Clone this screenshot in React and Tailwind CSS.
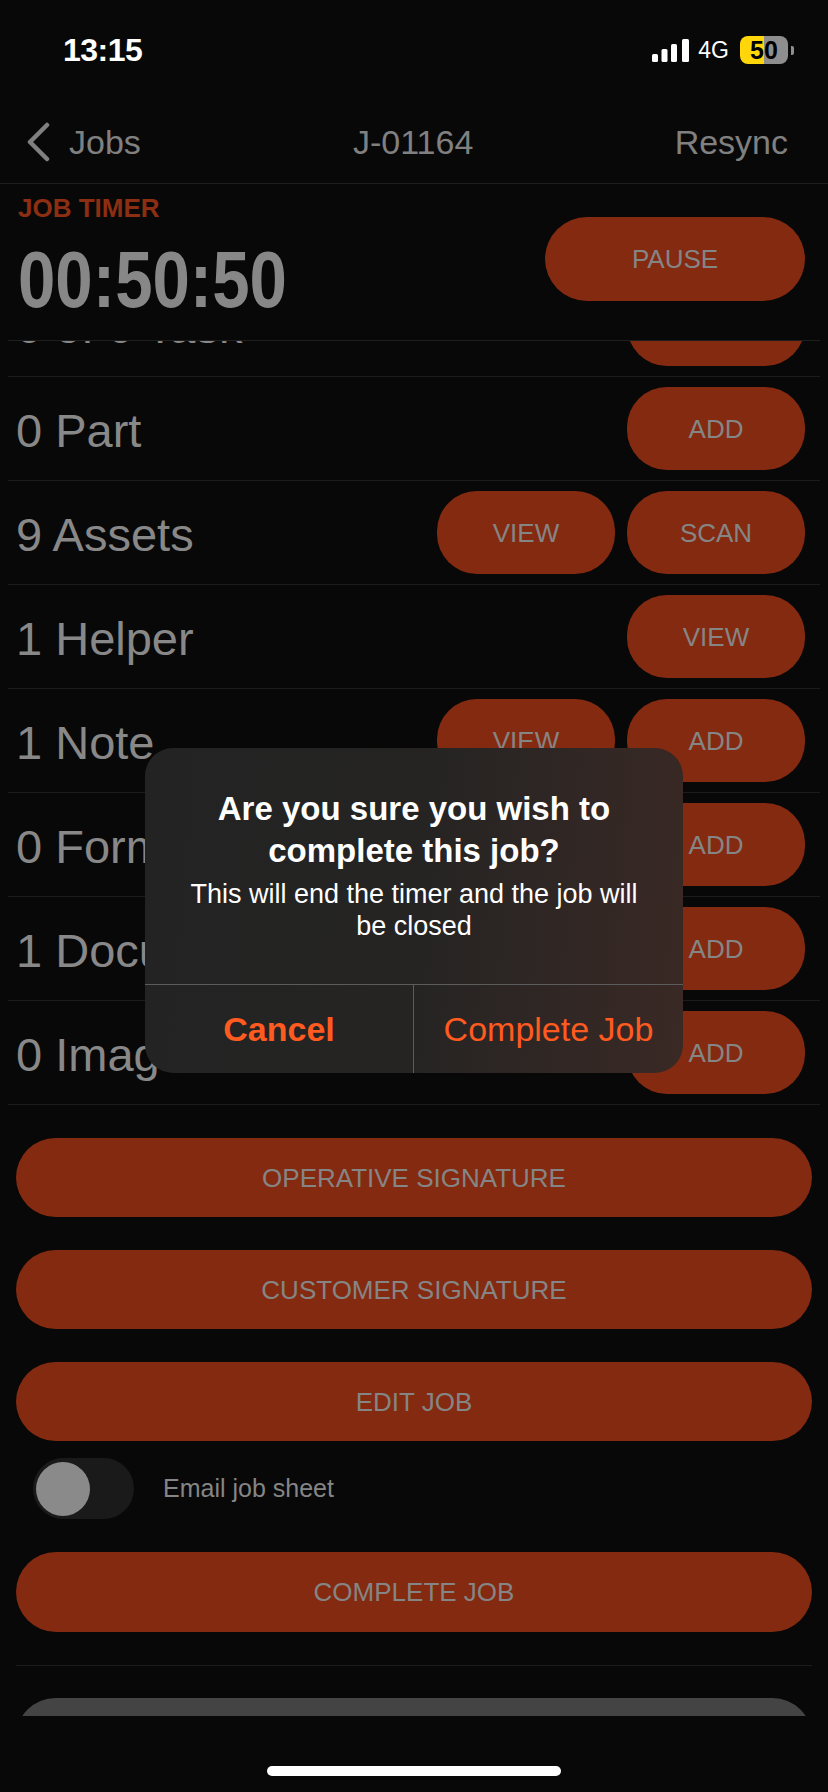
import React from "react";

const rows = [
  { label: "0 of 0 Task", buttons: ["VIEW"] },
  { label: "0 Part", buttons: ["ADD"] },
  { label: "9 Assets", buttons: ["VIEW", "SCAN"] },
  { label: "1 Helper", buttons: ["VIEW"] },
  { label: "1 Note", buttons: ["VIEW", "ADD"] },
  { label: "0 Forms", buttons: ["ADD"] },
  { label: "1 Document", buttons: ["ADD"] },
  { label: "0 Images", buttons: ["ADD"] },
];

function StatusBar() {
  return (
    <div className="h-[100px] flex items-center justify-between pl-[63px] pr-[34px]">
      <span className="text-[32px] font-bold text-white leading-none tracking-[-0.5px]">13:15</span>
      <div className="flex items-center">
        <svg width="37" height="23" viewBox="0 0 37 23" className="mr-[9px]">
          <rect x="0" y="15" width="6" height="8" rx="1.5" fill="#fff" />
          <rect x="9.5" y="10" width="6" height="13" rx="1.5" fill="#fff" />
          <rect x="19" y="5" width="6" height="18" rx="1.5" fill="#fff" />
          <rect x="30" y="0" width="7" height="23" rx="1.5" fill="#fff" />
        </svg>
        <span className="text-[23px] text-white leading-none mr-[11px]">4G</span>
        <div className="relative flex items-center">
          <div className="relative w-[48px] h-[28px] rounded-[8px] overflow-hidden flex">
            <div className="w-[24px] h-full bg-[#ffd60a]" />
            <div className="flex-1 h-full bg-[#8e8e8e]" />
            <span className="absolute inset-0 flex items-center justify-center text-[25px] font-bold text-black leading-none">
              50
            </span>
          </div>
          <div className="ml-[3px] w-[3px] h-[9px] rounded-r-[2px] bg-[#8e8e8e]" />
        </div>
      </div>
    </div>
  );
}

function NavBar() {
  return (
    <div className="relative h-[84px] flex items-center border-b border-[#1e1e1e]">
      <div className="flex items-center pl-[25px]">
        <svg width="26" height="40" viewBox="0 0 26 40">
          <path d="M22 3 L5 20 L22 37" stroke="#808080" strokeWidth="4.5" fill="none" strokeLinecap="round" strokeLinejoin="round" />
        </svg>
        <span className="ml-[18px] text-[34px] text-[#808080] leading-none">Jobs</span>
      </div>
      <span className="absolute left-[353px] text-[34px] text-[#808080] leading-none">J-01164</span>
      <span className="absolute right-[40px] text-[34px] text-[#808080] leading-none">Resync</span>
    </div>
  );
}

function PillButton({ children, className }) {
  return (
    <div
      className={
        "flex items-center justify-center bg-[#842a10] text-[#858585] text-[26px] leading-none " + className
      }
    >
      {children}
    </div>
  );
}

export default function App() {
  return (
    <div className="relative w-[828px] h-[1792px] bg-[#080808] overflow-hidden font-['Liberation_Sans',Arial,sans-serif] flex flex-col">
      <StatusBar />
      <NavBar />

      {/* timer header */}
      <div className="mx-2 h-[157px] border-b border-[#1e1e1e] flex justify-between pt-[11px] pl-[10px] pr-[15px]">
        <div className="flex flex-col">
          <span className="text-[26px] font-bold leading-none text-[#8c2e12]">JOB TIMER</span>
          <span className="mt-[19px] text-[80px] font-bold leading-none text-[#878787] origin-left scale-x-[0.84] inline-block">
            00:50:50
          </span>
        </div>
        <PillButton className="mt-[22px] w-[260px] h-[84px] rounded-[42px]">PAUSE</PillButton>
      </div>

      {/* scrolled content */}
      <div className="h-[1375px] overflow-hidden">
        <div className="-mt-[68px]">
          {rows.map((r) => (
            <div
              key={r.label}
              className="mx-2 h-[104px] border-b border-[#1c1c1c] flex items-center justify-between pl-[8px] pr-[15px]"
            >
              <span className="mt-[4px] text-[47px] text-[#888] leading-none">{r.label}</span>
              <div className="flex gap-3">
                {r.buttons.map((b) => (
                  <PillButton key={b} className="w-[178px] h-[83px] rounded-[40px]">
                    {b}
                  </PillButton>
                ))}
              </div>
            </div>
          ))}

          <div className="mx-4 mt-[33px] flex flex-col">
            <PillButton className="h-[79px] rounded-[40px]">OPERATIVE SIGNATURE</PillButton>
            <PillButton className="mt-[33px] h-[79px] rounded-[40px]">CUSTOMER SIGNATURE</PillButton>
            <PillButton className="mt-[33px] h-[79px] rounded-[40px]">EDIT JOB</PillButton>

            <div className="mt-[17px] h-[61px] flex items-center pl-[17px]">
              <div className="w-[101px] h-[61px] rounded-full bg-[#1a1a1a] flex items-center pl-[3px]">
                <div className="w-[54px] h-[54px] rounded-full bg-[#8a8a8a]" />
              </div>
              <span className="ml-[29px] text-[25px] text-[#858585] leading-none">Email job sheet</span>
            </div>

            <PillButton className="mt-[33px] h-[80px] rounded-[40px]">COMPLETE JOB</PillButton>
            <div className="mt-[33px] h-px bg-[#1c1c1c]" />
            <div className="mt-[32px] h-[79px] rounded-[40px] bg-[#444]" />
          </div>
        </div>
      </div>

      {/* home indicator */}
      <div className="flex-1 flex justify-center pt-[50px]">
        <div className="w-[294px] h-[10px] rounded-full bg-white" />
      </div>

      {/* alert */}
      <div className="absolute left-[145px] top-[748px] w-[538px] h-[325px] rounded-[28px] overflow-hidden flex flex-col bg-[linear-gradient(95deg,#232323_0%,#252423_50%,#3a2925_100%)]">
        <div className="h-[236px] flex flex-col items-center text-center px-[30px] pt-[40px]">
          <p className="text-[33px] font-bold leading-[42px] text-white">
            Are you sure you wish to complete this job?
          </p>
          <p className="mt-[6px] text-[27px] leading-[32px] text-white">
            This will end the timer and the job will be closed
          </p>
        </div>
        <div className="flex-1 flex border-t border-[#5c5c5c]">
          <div className="w-[269px] flex items-center justify-center border-r border-[#5c5c5c] text-[34px] font-bold text-[#ff5a1f]">
            Cancel
          </div>
          <div className="flex-1 flex items-center justify-center text-[34px] text-[#ff5a1f]">Complete Job</div>
        </div>
      </div>
    </div>
  );
}
